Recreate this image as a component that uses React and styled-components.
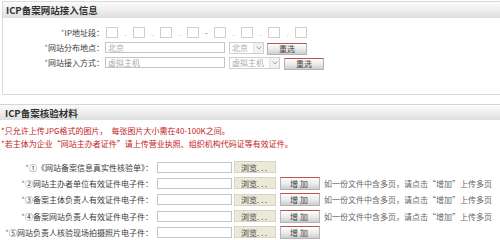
import React from 'react';
import styled, { createGlobalStyle } from 'styled-components';

const GlobalStyle = createGlobalStyle`
  html, body {
    margin: 0;
    padding: 0;
    background: #fff;
  }
  body {
    font-family: "Noto Sans CJK SC", "DejaVu Sans", sans-serif;
    font-size: 8px;
    color: #444;
  }
`;

const Page = styled.div`
  width: 500px;
  height: 240px;
  overflow: hidden;
`;

const Panel = styled.section`
  box-sizing: border-box;
  margin: ${p => p.first ? '1px 0 0 2px' : '9px 0 0 0'};
  height: ${p => p.first ? '94px' : 'auto'};
  border: ${p => p.first ? '1px solid #dadada' : 'none'};
  border-right: none;
  background: #fff;
`;

const PanelTitle = styled.h2`
  box-sizing: border-box;
  margin: 0;
  height: 17px;
  line-height: 16px;
  padding-left: ${p => p.first ? '3px' : '5px'};
  border-top: ${p => p.first ? 'none' : '1px solid #d6d6d6'};
  border-bottom: 1px solid #fff;
  background: linear-gradient(#fbfbfb, #f1f1f1 40%, #dedede);
  font-size: 9.5px;
  font-weight: bold;
  color: #333;
`;

const FormBody = styled.div`
  padding-top: 6px;
`;

const FormRow = styled.div`
  display: flex;
  align-items: center;
  height: ${p => p.h || 15}px;
`;

const Label = styled.span`
  flex: none;
  width: ${p => p.w}px;
  text-align: right;
  white-space: nowrap;
  color: #3a3a3a;
`;

const Star = styled.span`
  color: #888;
`;

const IpGroup = styled.div`
  display: flex;
  align-items: center;
  margin-left: 2px;
`;

const IpBox = styled.span`
  box-sizing: border-box;
  width: 12px;
  height: 11px;
  border: 1px solid #cfcfcf;
  background: #fff;
`;

const IpSep = styled.span`
  width: 15px;
  text-align: center;
  color: ${p => p.dash ? '#666' : '#bbb'};
  font-size: 8px;
  line-height: 11px;
`;

const TextInput = styled.span`
  box-sizing: border-box;
  display: inline-flex;
  align-items: center;
  width: ${p => p.w}px;
  height: 11px;
  margin-left: ${p => p.ml || 0}px;
  padding-left: 2px;
  border: 1px solid #c4c4c4;
  background: #fff;
  color: #aaa;
  flex: none;
`;

const FakeSelect = styled.span`
  box-sizing: border-box;
  display: inline-flex;
  align-items: center;
  justify-content: space-between;
  width: ${p => p.w}px;
  height: 12px;
  margin-left: 4px;
  padding-left: 2px;
  border: 1px solid #cfcfcf;
  background: #fff;
  color: #aaa;
  flex: none;
`;

const SelectArrow = styled.span`
  display: inline-flex;
  align-items: center;
  justify-content: center;
  width: 9px;
  height: 10px;
  background: #f2f2f2;
  border-left: 1px solid #e4e4e4;
`;

const GreyButton = styled.span`
  box-sizing: border-box;
  display: inline-flex;
  align-items: center;
  justify-content: center;
  width: 40px;
  height: ${p => p.h || 12}px;
  margin-left: ${p => p.ml || 3}px;
  margin-top: ${p => p.mt || 0}px;
  border: 1px solid #b4b4b4;
  border-top: 1px solid #c0504d;
  background: linear-gradient(#fdfdfd, #ececec 50%, #cdcdcd);
  color: #444;
  letter-spacing: ${p => p.ls || 0}px;
  flex: none;
`;

const Notes = styled.div`
  padding: 3px 0 0 1px;
`;

const NoteLine = styled.p`
  margin: 0;
  height: 13px;
  line-height: 13px;
  color: #c41a22;
  white-space: nowrap;
`;

const UploadList = styled.div`
  margin-top: 9px;
`;

const BrowseButton = styled.span`
  box-sizing: border-box;
  display: inline-flex;
  align-items: center;
  width: 42px;
  height: 12px;
  margin-left: 2px;
  padding-left: 6px;
  border: 1px solid #d8d4c2;
  background: #ece9d8;
  color: #444;
  flex: none;
`;

const Hint = styled.span`
  margin-left: 4px;
  color: #666;
  white-space: nowrap;
`;

const Chevron = () => (
  <svg width="6" height="4" viewBox="0 0 6 4">
    <path d="M0.5 0.5 L3 3 L5.5 0.5" fill="none" stroke="#999" strokeWidth="0.9" />
  </svg>
);

const ipParts = [0, 1, 2, 3, 4, 5, 6, 7];

const uploads = [
  { label: '①《网站备案信息真实性核验单》：', add: false, hint: false },
  { label: '②网站主办者单位有效证件电子件：', add: true, hint: true },
  { label: '③备案主体负责人有效证件电子件：', add: true, hint: true },
  { label: '④备案网站负责人有效证件电子件：', add: true, hint: true },
  { label: '⑤网站负责人核验现场拍摄照片电子件：', add: true, hint: false },
];

export default function App() {
  return (
    <Page lang="zh-CN">
      <GlobalStyle />
      <Panel first>
        <PanelTitle first>ICP备案网站接入信息</PanelTitle>
        <FormBody>
          <FormRow>
            <Label w={101}><Star>*</Star>IP地址段：</Label>
            <IpGroup>
              {ipParts.map(i => (
                <React.Fragment key={i}>
                  <IpBox />
                  {i < 7 && <IpSep dash={i === 3}>{i === 3 ? '-' : '.'}</IpSep>}
                </React.Fragment>
              ))}
            </IpGroup>
          </FormRow>
          <FormRow>
            <Label w={101}><Star>*</Star>网站分布地点：</Label>
            <TextInput w={120} ml={1}>北京</TextInput>
            <FakeSelect w={35}>北京<SelectArrow><Chevron /></SelectArrow></FakeSelect>
            <GreyButton mt={2}>重选</GreyButton>
          </FormRow>
          <FormRow>
            <Label w={101}><Star>*</Star>网站接入方式：</Label>
            <TextInput w={120} ml={1}>虚拟主机</TextInput>
            <FakeSelect w={51}>虚拟主机<SelectArrow><Chevron /></SelectArrow></FakeSelect>
            <GreyButton mt={2} ml={4}>重选</GreyButton>
          </FormRow>
        </FormBody>
      </Panel>

      <Panel>
        <PanelTitle>ICP备案核验材料</PanelTitle>
        <Notes>
          <NoteLine>*只允许上传JPG格式的图片，　每张图片大小需在40-100K之间。</NoteLine>
          <NoteLine>*若主体为企业“网站主办者证件”请上传营业执照、组织机构代码证等有效证件。</NoteLine>
        </Notes>
        <UploadList>
          {uploads.map(u => (
            <FormRow key={u.label} h={16.3}>
              <Label w={153}><Star>*</Star>{u.label}</Label>
              <TextInput w={75} ml={4} />
              <BrowseButton>浏览. . .</BrowseButton>
              {u.add && <GreyButton h={13} ml={4} ls={2}>增加</GreyButton>}
              {u.hint && <Hint>如一份文件中含多页，请点击“增加”上传多页</Hint>}
            </FormRow>
          ))}
        </UploadList>
      </Panel>
    </Page>
  );
}
